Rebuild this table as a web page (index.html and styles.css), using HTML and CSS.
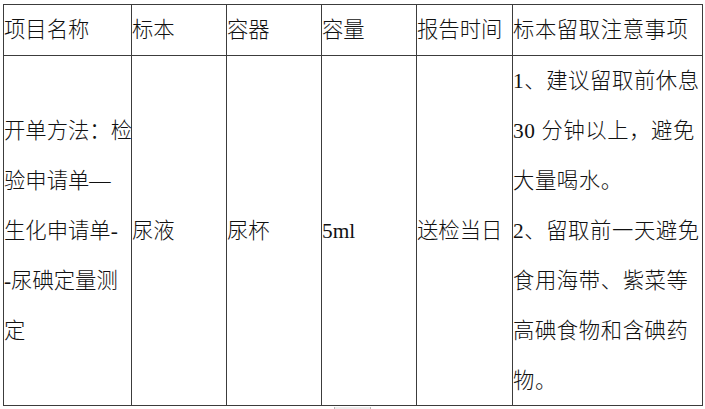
FILE: index.html
```html
<!DOCTYPE html>
<html lang="zh">
<head>
<meta charset="utf-8">
<title>尿碘定量测定</title>
<link rel="stylesheet" href="styles.css">
</head>
<body>
<div class="sheet">
  <div class="cell head">项目名称</div>
  <div class="cell head">标本</div>
  <div class="cell head">容器</div>
  <div class="cell head">容量</div>
  <div class="cell head">报告时间</div>
  <div class="cell head wide">标本留取注意事项</div>

  <div class="cell body"><p>开单方法：检<br>验申请单—<br>生化申请单-<br>-尿碘定量测<br>定</p></div>
  <div class="cell body"><p>尿液</p></div>
  <div class="cell body"><p>尿杯</p></div>
  <div class="cell body"><p>5ml</p></div>
  <div class="cell body"><p>送检当日</p></div>
  <div class="cell body wide"><p>1、建议留取前休息<br>30 分钟以上，避免<br>大量喝水。<br>2、留取前一天避免<br>食用海带、紫菜等<br>高碘食物和含碘药<br>物。</p></div>
</div>
<div class="scroll"></div>
</body>
</html>
```

FILE: styles.css
```css
html, body {
  margin: 0;
  padding: 0;
  background: #ffffff;
}

body {
  padding: 4px 0 0 3px;
  font-family: "Liberation Serif", "Noto Sans CJK SC", serif;
  font-weight: 300;
  color: #111111;
}

.sheet {
  display: grid;
  grid-template-columns: 127px 94px 94px 94px 95px 189px;
  grid-template-rows: 50px 349px;
  gap: 1px;
  padding: 1px;
  background: #3c3c3c;
  width: 698px;
}

.cell {
  background: #ffffff;
  font-size: 21.33px;
  line-height: 50px;
  white-space: nowrap;
  overflow: visible;
}

.cell p {
  margin: 0;
}

.head {
  display: flex;
  align-items: center;
}

.body {
  display: flex;
  align-items: center;
}

.wide {
  letter-spacing: 0.6px;
}

.scroll {
  margin: 1px 0 0 331px;
  width: 35px;
  height: 2px;
  background: #ececec;
  border-left: 1px solid #b8b8b8;
  border-right: 1px solid #b8b8b8;
}
```
